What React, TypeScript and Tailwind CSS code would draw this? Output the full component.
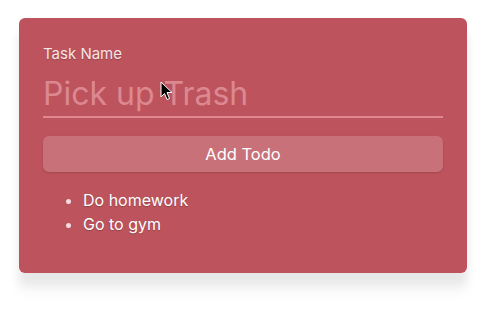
import { useState } from "react";

const todos = ["Do homework", "Go to gym"];

const Cursor = () => (
  <svg
    width="13"
    height="20"
    viewBox="0 0 13 20"
    className="absolute left-[160px] top-[81px] pointer-events-none"
  >
    <path
      d="M1 1 L1 16 L4.5 12.5 L7 18.5 L9.5 17.5 L7 11.5 L12 11.5 Z"
      fill="#000"
      stroke="#fff"
      strokeWidth="1"
      strokeLinejoin="round"
    />
  </svg>
);

const App = () => {
  const [task, setTask] = useState("");

  return (
    <main className="relative w-[488px] h-[324px] bg-white font-['Inter','Liberation_Sans',sans-serif] overflow-hidden">
      <div className="pt-[18px] pl-[19px]">
        {/* Card */}
        <div className="w-[448px] h-[255px] rounded-md bg-[#bd535c] pt-[26px] px-6 shadow-[0_12px_8px_rgba(0,0,0,0.06),0_18px_12px_2px_rgba(0,0,0,0.035)] text-white [text-shadow:0_1px_1px_rgba(0,0,0,0.22)]">
          <label className="block text-[15px] leading-5 text-[#f6e4e6]">Task Name</label>
          <input
            value={task}
            onChange={(e) => setTask(e.target.value)}
            placeholder="Pick up Trash"
            className="mt-[6px] w-full h-[48px] bg-transparent border-b-2 border-[#e2878f] text-[32px] leading-10 outline-none placeholder:text-[#dc8891] [text-shadow:none]"
          />
          <button className="mt-[18px] w-full h-9 rounded-md bg-[#c97179] shadow-[0_1px_2px_rgba(0,0,0,0.15)] text-[16.5px] text-white">
            Add Todo
          </button>
          <ul className="mt-[16px] pl-10 list-disc text-[16px] leading-6 marker:text-[#f3dcdf]">
            {todos.map((t) => (
              <li key={t}>{t}</li>
            ))}
          </ul>
        </div>
      </div>
      <Cursor />
    </main>
  );
};

export default App;
